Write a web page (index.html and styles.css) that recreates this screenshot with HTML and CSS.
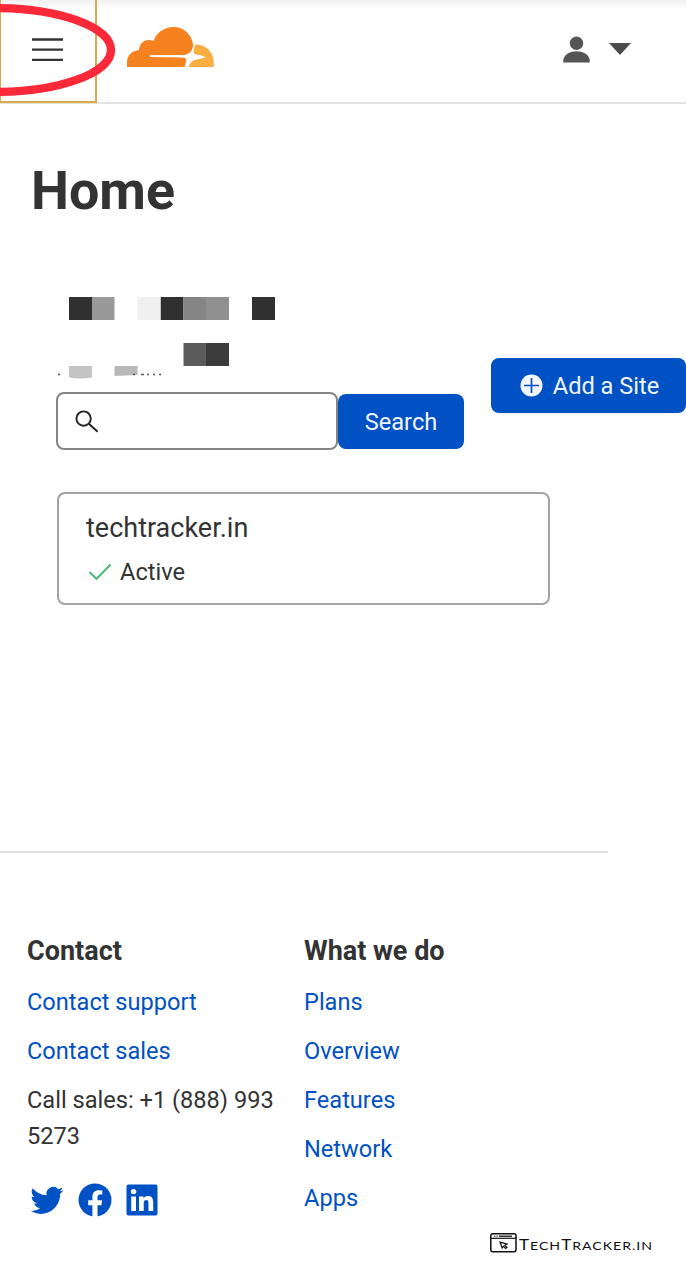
FILE: index.html
```html
<!DOCTYPE html>
<html lang="en">
<head>
<meta charset="utf-8">
<title>Home</title>
<link rel="stylesheet" href="styles.css">
</head>
<body>
<header class="topbar">
  <button class="menu" aria-label="Menu">
    <svg width="32" height="26" viewBox="0 0 32 26"><path d="M0 2.500h31M0 12.700h31M0 22.900h31" stroke="#333" stroke-width="2.300"/></svg>
  </button>
  <svg class="logo" width="90" height="44" viewBox="0 0 90 44">
    <path fill="#f6821f" d="M1 41V36.500C1 29.500 6 24.500 13 24.300C13 17 20 11.500 27.500 15C30.500 6.500 38.500 1 47.500 1C57 1 64.500 7 67 17.500C67.500 22 65 27.500 60 29.300H24.500V31H57C60.500 31.500 61 33 60 36L58.500 41Z"/>
    <path fill="#fbad41" d="M69.300 18.500C80 18 88 26.500 87.800 37.500V41H62.500C64 36.500 66 34.500 70.500 33.500C74 32.800 77 32.300 79.500 31.600C76 29.500 73 28.600 70.500 28.500C66.500 28.300 67.500 24 69.300 18.500Z"/>
    <path fill="#fff" d="M24 29.300H57Q63.500 28 66 25Q67 28.700 71 29.500L80 31L71 32.500Q64 34.500 62 41H59.500Q61.500 35 60 33Q59 31.600 57 31.500L24 30.900Z"/>
  </svg>
  <div class="account">
    <svg width="27" height="28" viewBox="0 0 27 28"><circle cx="13.500" cy="7.300" r="6.700" fill="#555"/><path fill="#555" d="M.3 26.500V23.500C2 18 7 15.300 13.500 15.300S25 18 26.700 23.500V26.500Z"/></svg>
    <svg width="22" height="12" viewBox="0 0 22 12"><path fill="#4b4b4b" d="M0 0H22L11 12Z"/></svg>
  </div>
  <svg class="ring" width="120" height="100" viewBox="0 0 120 100"><ellipse cx="-5" cy="50" rx="116" ry="42" fill="none" stroke="#fc2a38" stroke-width="8.300"/></svg>
</header>
<main>
  <h1 class="title">Home</h1>
  <section class="tools">
    <div class="left">
      <svg class="redacted" width="240" height="83" viewBox="0 0 240 83">
        <path fill="#303030" d="M12 0h23v23H12zM103.500 0h23v23h-23zM195 0h23v23h-23z"/>
        <path fill="#999" d="M35 0h22.500v23H35z"/><path fill="#f0f0f0" d="M80.500 0h23v23h-23z"/>
        <path fill="#858585" d="M126.500 0h23v23h-23z"/><path fill="#909090" d="M149 0h23v23h-23z"/>
        <path fill="#5b5b5b" d="M126.500 46h23v23h-23z"/><path fill="#3b3b3b" d="M149 46h23v23h-23z"/>
        <path fill="#c4c4c4" d="M12 69h23v11.500q-12 2-23 0z"/><path fill="#b8b8b8" d="M57.500 69h23v9l-23 1z"/>
        <path d="M1 77.500h2M76 77.500h2M84 77.500h3M90 77.500h2M96 77.500h2M102 77.500h2" stroke="#555" stroke-width="1.500"/>
      </svg>
      <div class="search">
        <div class="field"><svg width="24" height="24" viewBox="0 0 24 24" fill="none" stroke="#222" stroke-width="1.900"><circle cx="8.600" cy="8.600" r="7.200"/><path d="M13.800 13.800L22.700 21.800"/></svg></div>
        <button class="btn search-btn">Search</button>
      </div>
    </div>
    <button class="btn add-btn"><svg width="23" height="23" viewBox="0 0 23 23"><circle cx="11.500" cy="11.500" r="11" fill="#f4f7fc"/><path d="M11.500 4v15M4 11.500h15" stroke="#0051c3" stroke-width="1.700"/></svg><span>Add a Site</span></button>
  </section>
  <article class="card">
    <div class="domain">techtracker.in</div>
    <div class="status"><svg width="24" height="18" viewBox="0 0 24 18"><path d="M1.500 9L8.500 16L22.500 1.500" fill="none" stroke="#46b87c" stroke-width="1.900"/></svg><span>Active</span></div>
  </article>
</main>
<footer class="footer">
  <div class="col contact">
    <h2>Contact</h2>
    <a>Contact support</a>
    <a>Contact sales</a>
    <p>Call sales: +1 (888) 993 5273</p>
    <div class="social">
      <svg width="35" height="35" viewBox="0 0 24 24"><path fill="#0051c3" d="M23.640 4.937c-.835.370-1.732.620-2.675.733a4.670 4.670 0 0 0 2.048-2.578 9.300 9.300 0 0 1-2.958 1.130 4.660 4.660 0 0 0-7.938 4.250 13.229 13.229 0 0 1-9.602-4.868A4.660 4.660 0 0 0 3.960 9.824a4.647 4.647 0 0 1-2.110-.583v.060a4.660 4.660 0 0 0 3.737 4.568 4.692 4.692 0 0 1-2.104.080 4.661 4.661 0 0 0 4.352 3.234 9.348 9.348 0 0 1-5.786 1.995 9.500 9.500 0 0 1-1.112-.065 13.175 13.175 0 0 0 7.140 2.093c8.570 0 13.255-7.098 13.255-13.254 0-.200-.005-.402-.014-.602a9.470 9.470 0 0 0 2.323-2.410z"/></svg>
      <svg width="34" height="34" viewBox="0 0 34 34"><circle cx="17" cy="17" r="16.500" fill="#0051c3"/><path fill="#fff" d="M14.400 34V22.200H10.200V17.300H14.400V13.700C14.400 9.500 16.900 7.200 20.700 7.200C22.500 7.200 24.300 7.500 24.300 7.500V11.600H22.200C20.100 11.600 19.500 12.900 19.500 14.200V17.300H24.100L23.400 22.200H19.500V34Z"/></svg>
      <svg width="32" height="32" viewBox="0 0 32 32"><rect x=".5" y=".5" width="31" height="31" rx="2" fill="#0051c3"/><circle cx="7.600" cy="7.600" r="2.700" fill="#fff"/><path fill="#fff" d="M5.200 12.400H10V27H5.200ZM13 12.400H17.500V14.400C18.500 12.800 20 12 22 12C26 12 27.200 14.500 27.200 18.700V27H22.500V19.700C22.500 17.500 22 16.100 20.200 16.100C18.300 16.100 17.700 17.500 17.700 19.700V27H13Z"/></svg>
    </div>
  </div>
  <div class="col">
    <h2>What we do</h2>
    <a>Plans</a>
    <a>Overview</a>
    <a>Features</a>
    <a>Network</a>
    <a>Apps</a>
  </div>
</footer>
<div class="watermark">
  <svg width="27" height="20" viewBox="0 0 27 20" fill="none" stroke="#111"><rect x=".8" y=".8" width="25.200" height="17.900" rx="2" stroke-width="1.500"/><path d="M1 5.300H26" stroke-width="1.200"/><path d="M4 3.200h4" stroke-dasharray="1 .6"/><path d="M9 3.200h13" stroke-width="1.300"/><path d="M10 9.200L17 11L14.800 12.200L17 14.500L15.500 15.500L13.500 13.200L12.200 15Z" stroke-width="1.200"/></svg>
  <span class="brand"><span class="cap">T</span>ECH<span class="cap">T</span>RACKER.IN</span>
</div>
</body>
</html>
```
FILE: styles.css
```css
* { box-sizing: border-box; }
body {
  margin: 0;
  position: relative;
  width: 686px;
  height: 1280px;
  overflow: hidden;
  background: #fff;
  color: #333;
  font: 23.6px/36px Roboto, sans-serif;
}
h1, h2, p { margin: 0; }
button { font: inherit; border: 0; padding: 0; }
svg { display: block; flex: none; }

.topbar {
  position: relative;
  height: 104px;
  display: flex;
  align-items: flex-start;
  border-bottom: 2px solid #e2e2e2;
  background: linear-gradient(#f1f1f1, #fff 9px);
}
.menu {
  width: 97px;
  height: 103px;
  display: flex;
  align-items: flex-start;
  border: 2px solid #dcab45;
  border-left-width: 1px;
  border-top: 0;
  background: transparent;
  padding: 37px 0 0 31px;
}
.logo { margin: 26px 0 0 29px; }
.account { display: flex; align-items: flex-start; gap: 19px; margin: 36px 55px 0 auto; }
.account svg + svg { margin-top: 7px; }
.ring { position: absolute; left: 0; top: 0; }

.title { padding: 55px 0 0 31px; font-size: 53.8px; line-height: 64px; font-weight: 700; }
.tools { display: flex; justify-content: space-between; padding: 74px 0 0 56px; }
.redacted { margin-left: .5px; }
.search { display: flex; align-items: flex-start; margin-top: 12px; }
.field {
  width: 282px;
  height: 58px;
  border: 2px solid #858585;
  border-radius: 8px;
  padding: 16px 0 0 17px;
}
.btn { height: 55px; border-radius: 8px; background: #0051c3; color: #f0f5fc; }
.search-btn { width: 126px; margin-top: 2px; padding-top: 1px; }
.add-btn { width: 195px; margin-top: 61px; display: flex; align-items: center; justify-content: center; gap: 10px; padding-left: 2px; }
.card {
  width: 493px;
  height: 113px;
  margin: 42px 0 0 57px;
  border: 2px solid #a3a3a3;
  border-radius: 8px;
  padding: 16px 0 0 27px;
}
.domain { font-size: 27px; }
.status { display: flex; align-items: center; gap: 8px; margin-top: 8px; padding-left: 2px; }

.footer {
  width: 608px;
  margin-top: 246px;
  border-top: 2px solid #dedede;
  padding: 80px 0 0 27px;
  display: grid;
  grid-template-columns: 252px 1fr;
  column-gap: 25px;
}
.col { display: flex; flex-direction: column; gap: 12.9px; }
.col h2 { font-size: 27px; line-height: 36px; font-weight: 700; margin-bottom: 2.4px; }
.col a { color: #0051c3; }
.social { display: flex; align-items: center; gap: 14px; margin: 16px 0 0 2px; }

.watermark { position: absolute; left: 490px; top: 1233px; display: flex; color: #111; }
.brand { font: 12px/24px Lato, sans-serif; letter-spacing: .8px; margin-left: 2px; transform-origin: 0 50%; transform: scaleX(1.180); }
.cap { font-size: 14.500px; }
```
